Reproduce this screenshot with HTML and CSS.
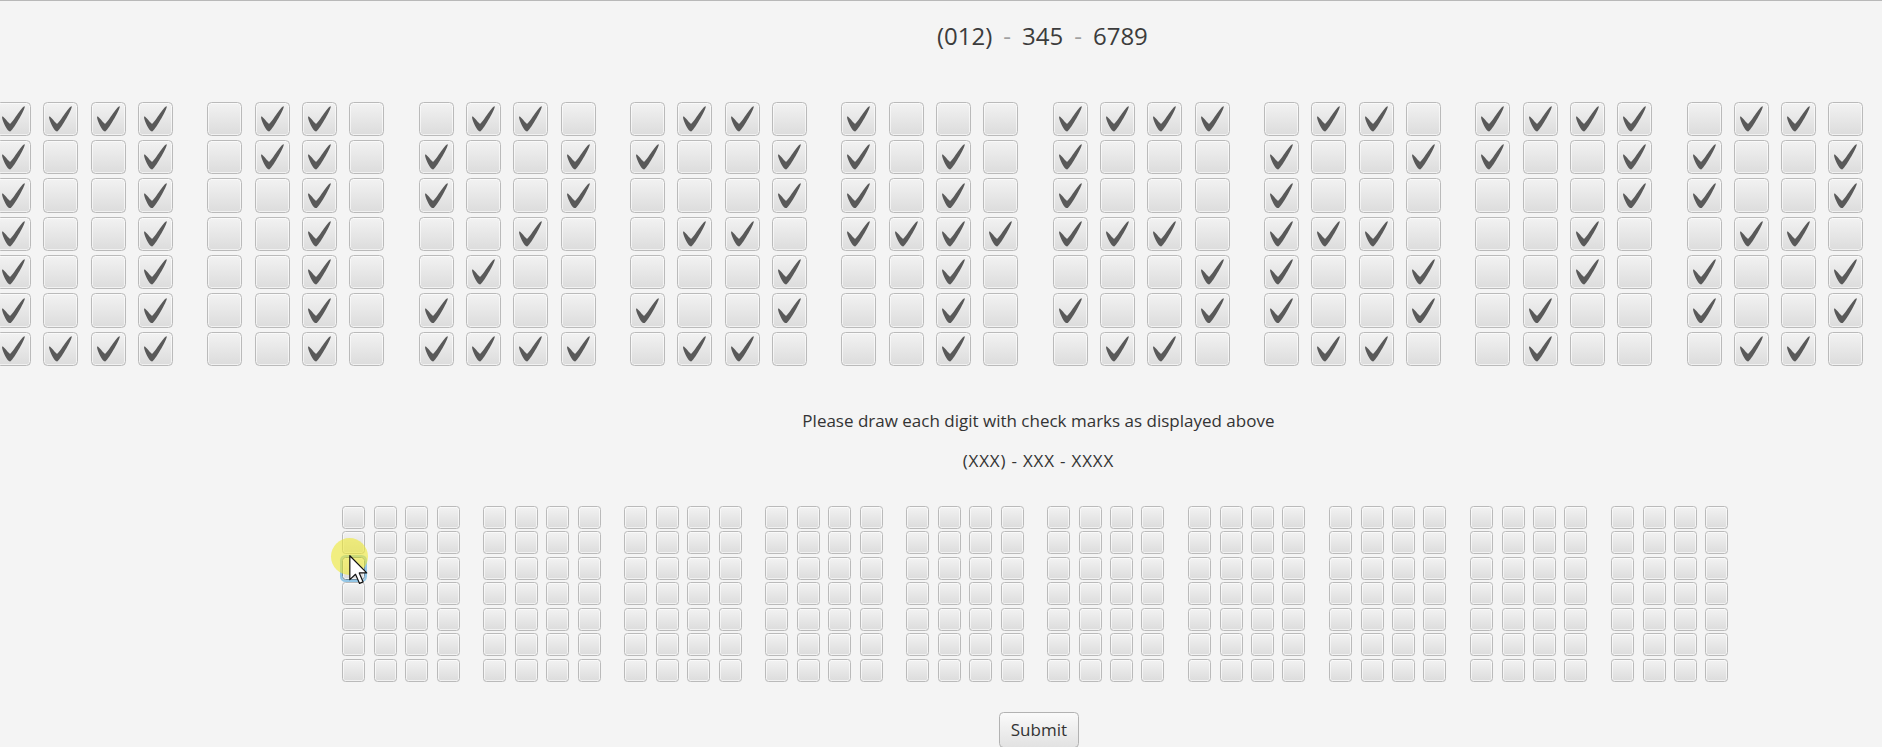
FILE: index.html
```html
<!DOCTYPE html>
<html lang="en">
<head>
    <meta charset="UTF-8">
    <meta name="viewport" content="width=device-width, initial-scale=1.0">
    <title>Phone Number Check</title>
    <link rel="stylesheet" href="styles.css">
</head>
<body>
    <div class="app">
        <!-- Number shown to the user -->
        <div class="number">
            <span>(012)</span><span class="dash">-</span><span>345</span><span class="dash">-</span><span>6789</span>
        </div>

        <!-- Digits drawn with check marks -->
        <div class="digits digits-big" id="display"></div>

        <p class="hint">Please draw each digit with check marks as displayed above</p>
        <p class="format">(XXX) - XXX - XXXX</p>

        <!-- Empty grid for the user to draw in -->
        <div class="digits digits-small" id="drawing"></div>

        <button class="submit" type="button">Submit</button>
    </div>

    <!-- Mouse pointer from the recording -->
    <div class="halo"></div>
    <svg class="pointer" width="19" height="29" viewBox="0 0 12.6 19.4">
        <path d="M0.5,0.5 L0.5,16.5 L4.3,12.9 L7,19 L9.4,18 L6.8,12 L11.8,12 Z" fill="#fff" stroke="#111" stroke-width="0.8" stroke-linejoin="round"/>
    </svg>

    <script>
        const patterns = [
            ["XXXX", "X  X", "X  X", "X  X", "X  X", "X  X", "XXXX"],
            [" XX ", " XX ", "  X ", "  X ", "  X ", "  X ", "  X "],
            [" XX ", "X  X", "X  X", "  X ", " X  ", "X   ", "XXXX"],
            [" XX ", "X  X", "   X", " XX ", "   X", "X  X", " XX "],
            ["X   ", "X X ", "X X ", "XXXX", "  X ", "  X ", "  X "],
            ["XXXX", "X   ", "X   ", "XXX ", "   X", "X  X", " XX "],
            [" XX ", "X  X", "X   ", "XXX ", "X  X", "X  X", " XX "],
            ["XXXX", "X  X", "   X", "  X ", "  X ", " X  ", " X  "],
            [" XX ", "X  X", "X  X", " XX ", "X  X", "X  X", " XX "],
            [" XX ", "X  X", "X  X", " XXX", "   X", "X  X", " XX "]
        ];

        const mark = '<svg class="mark" viewBox="-0.4 -1.1 16.6 17.4" preserveAspectRatio="none">' +
            '<path d="M-0.25,6.083c0.843-0.758,4.583,4.833,5.75,4.833S14.5-1.5,15.917-0.917c1.292,0.532-8.75,17.083-10.5,17.083C3,16.167-1.083,6.833-0.25,6.083z"/></svg>';

        const display = document.getElementById("display");
        patterns.forEach(rows => {
            const digit = document.createElement("div");
            digit.className = "digit";
            rows.join("").split("").forEach(cell => {
                const box = document.createElement("span");
                box.className = "box";
                if (cell === "X") {
                    box.innerHTML = mark;
                }
                digit.appendChild(box);
            });
            display.appendChild(digit);
        });

        const drawing = document.getElementById("drawing");
        for (let d = 0; d < 10; d++) {
            const digit = document.createElement("div");
            digit.className = "digit";
            for (let i = 0; i < 28; i++) {
                const input = document.createElement("input");
                input.type = "checkbox";
                input.className = "cell";
                if (d === 0 && i === 8) {
                    input.classList.add("focused");
                }
                digit.appendChild(input);
            }
            drawing.appendChild(digit);
        }
    </script>
</body>
</html>
```

FILE: styles.css
```css
/* Page */
html {
    overflow: hidden;
}

body {
    margin: 0;
    height: 100vh;
    box-sizing: border-box;
    overflow: hidden;
    border-top: 1px solid #b8b8b8;
    background-color: #f4f4f4;
    font-family: "Open Sans", "Noto Sans", sans-serif;
    color: #333;
}

/* Wrapper is as wide as the big digit row */
.app {
    width: max-content;
    margin-left: -4px;
    display: flex;
    flex-direction: column;
    align-items: center;
}

/* Number on top */
.number {
    margin-top: 19px;
    margin-left: 14px;
    display: flex;
    gap: 11px;
    font-size: 24px;
    line-height: 32px;
    color: #3c3c3c;
}

.number .dash {
    color: #a0a0a0;
}

/* Digit grids */
.digits {
    display: flex;
}

.digit {
    display: grid;
}

.digits-big {
    margin-top: 49.6px;
    gap: 34.33px;
}

.digits-big .digit {
    grid-template-columns: repeat(4, 35px);
    grid-auto-rows: 34.5px;
    column-gap: 12.33px;
    row-gap: 3.83px;
}

.box,
.cell {
    box-sizing: border-box;
    border: 1.5px solid #bababa;
    background: linear-gradient(#f2f2f2, #dcdcdc);
    box-shadow: inset 0 0 0 1px rgba(255, 255, 255, 0.6);
}

.box {
    display: flex;
    align-items: center;
    justify-content: center;
    border-radius: 4.5px;
}

.mark {
    width: 23px;
    height: 25.6px;
    fill: #595959;
}

.digits-small {
    margin-top: 32.9px;
    gap: 23.8px;
}

.digits-small .digit {
    grid-template-columns: repeat(4, 23px);
    grid-auto-rows: 23px;
    column-gap: 8.4px;
    row-gap: 2.5px;
}

.cell {
    appearance: none;
    -webkit-appearance: none;
    margin: 0;
    width: 23px;
    height: 23px;
    border-radius: 3.5px;
}

.cell.focused {
    border-color: #6d8ea3;
    box-shadow: 0 0 0 2px #93c6e6, inset 0 0 0 1px rgba(255, 255, 255, 0.6);
}

/* Texts */
.hint,
.format {
    margin: 0;
    margin-left: 6px;
    font-size: 17px;
    line-height: 24px;
}

.hint {
    margin-top: 42.6px;
}

.format {
    margin-top: 16px;
    letter-spacing: 0.8px;
}

/* Button */
.submit {
    margin-top: 30.7px;
    margin-left: 7px;
    padding: 5px 11px;
    font-family: "Open Sans", "Noto Sans", sans-serif;
    font-size: 17px;
    line-height: 24px;
    color: #333;
    border: 1px solid #b2b2b2;
    border-radius: 4.5px;
    background: linear-gradient(#fafafa, #e2e2e2);
}

/* Recorded mouse pointer */
.halo {
    position: absolute;
    left: 331px;
    top: 538px;
    width: 37px;
    height: 37px;
    border-radius: 50%;
    background-color: rgba(238, 234, 50, 0.6);
}

.pointer {
    position: absolute;
    left: 349px;
    top: 555px;
}
```
